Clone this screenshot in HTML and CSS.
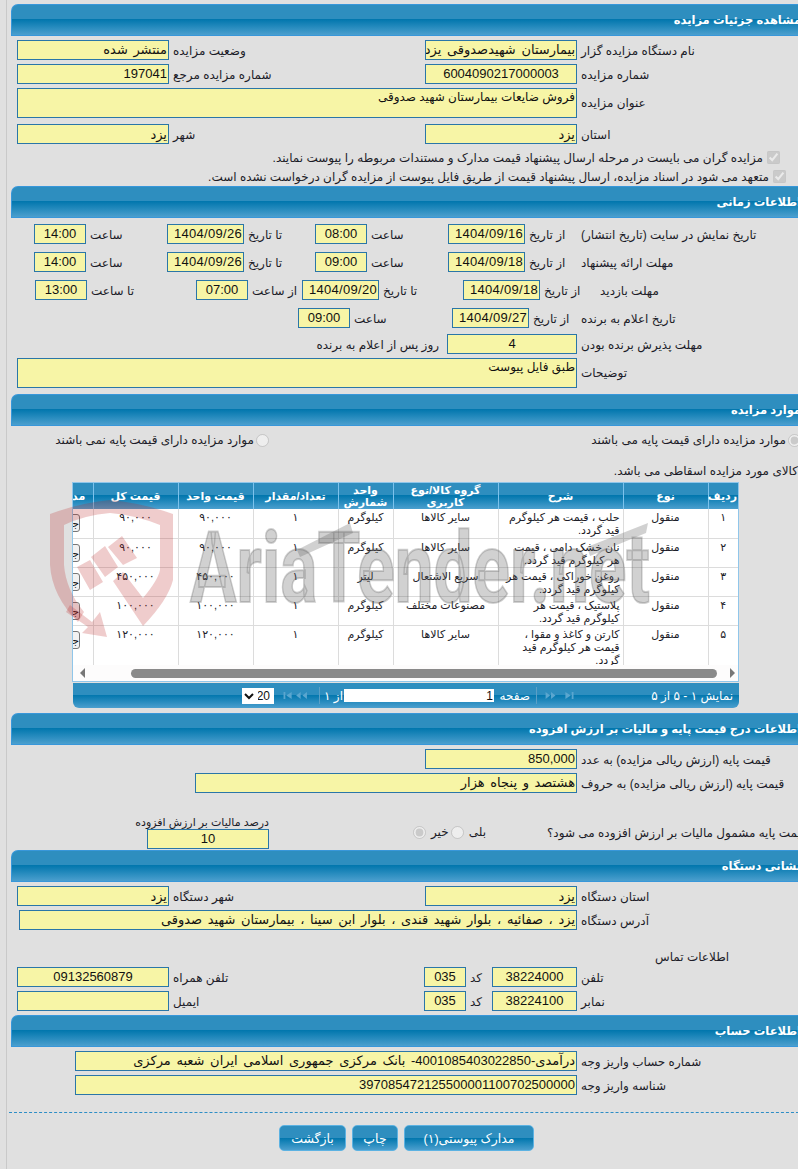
FILE: index.html
```html
<!DOCTYPE html>
<html lang="fa">
<head>
<meta charset="utf-8">
<title>مشاهده جزئیات مزایده</title>
<link rel="stylesheet" href="styles.css">
</head>
<body>
<div class="sheet">
<div class="frame">

<section class="panel">
  <h2 class="head">مشاهده جزئیات مزایده</h2>
  <div class="body b-first">
    <div class="row g-two"><div class="fld">منتشر شده</div><div class="lb">وضعیت مزایده</div><div class="fld">بیمارستان شهیدصدوقی یزد</div><div class="lb">نام دستگاه مزایده گزار</div></div>
    <div class="row g-two"><div class="fld">197041</div><div class="lb">شماره مزایده مرجع</div><div class="fld ctr">6004090217000003</div><div class="lb">شماره مزایده</div></div>
    <div class="row g-area"><div class="fld area">فروش ضایعات بیمارستان شهید صدوقی</div><div class="lb">عنوان مزایده</div></div>
    <div class="row g-two mt6"><div class="fld end">یزد</div><div class="lb">شهر</div><div class="fld end">یزد</div><div class="lb">استان</div></div>
    <div class="chk chk-a"><input type="checkbox" checked disabled><span>مزایده گران می بایست در مرحله ارسال پیشنهاد قیمت مدارک و مستندات مربوطه را پیوست نمایند.</span></div>
    <div class="chk chk-b"><input type="checkbox" checked disabled><span>متعهد می شود در اسناد مزایده، ارسال پیشنهاد قیمت از طریق فایل پیوست از مزایده گران درخواست نشده است.</span></div>
  </div>
</section>

<section class="panel">
  <h2 class="head">اطلاعات زمانی</h2>
  <div class="body b-time">
    <div class="row g-t1"><div class="fld ctr">14:00</div><div class="lb">ساعت</div><div class="fld date">1404/09/26</div><div class="lb">تا تاریخ</div><div class="fld ctr">08:00</div><div class="lb">ساعت</div><div class="fld date">1404/09/16</div><div class="lb">از تاریخ</div><div class="lb">تاریخ نمایش در سایت (تاریخ انتشار)</div></div>
    <div class="row g-t1"><div class="fld ctr">14:00</div><div class="lb">ساعت</div><div class="fld date">1404/09/26</div><div class="lb">تا تاریخ</div><div class="fld ctr">09:00</div><div class="lb">ساعت</div><div class="fld date">1404/09/18</div><div class="lb">از تاریخ</div><div class="lb">مهلت ارائه پیشنهاد</div></div>
    <div class="row g-t2"><div class="fld ctr">13:00</div><div class="lb">تا ساعت</div><div class="fld ctr">07:00</div><div class="lb">از ساعت</div><div class="fld date">1404/09/20</div><div class="lb">تا تاریخ</div><div class="fld date">1404/09/18</div><div class="lb">از تاریخ</div><div class="lb lb-far">مهلت بازدید</div></div>
    <div class="row g-t3"><div class="fld ctr">09:00</div><div class="lb">ساعت</div><div class="fld date">1404/09/27</div><div class="lb">از تاریخ</div><div class="lb">تاریخ اعلام به برنده</div></div>
    <div class="row g-t4 mt-6"><div class="lb lb-end">روز پس از اعلام به برنده</div><div class="fld ctr">4</div><div class="lb">مهلت پذیرش برنده بودن</div></div>
    <div class="row g-area mt-4"><div class="fld area">طبق فایل پیوست</div><div class="lb">توضیحات</div></div>
  </div>
</section>

<section class="panel">
  <h2 class="head">موارد مزایده</h2>
  <div class="body b-items">
    <div class="radios">
      <label class="opt opt-a"><input type="radio" name="base" disabled checked><span>موارد مزایده دارای قیمت پایه می باشند</span></label>
      <label class="opt"><input type="radio" name="base" disabled><span>موارد مزایده دارای قیمت پایه نمی باشند</span></label>
    </div>
    <p class="note">کالای مورد مزایده اسقاطی می باشد.</p>
    <div class="grid">
      <div class="grid-scroll">
        <table>
          <thead><tr><th class="c1">ردیف</th><th class="c2">نوع</th><th class="c3">شرح</th><th class="c4">گروه کالا/نوع کاربری</th><th class="c5">واحد شمارش</th><th class="c6">تعداد/مقدار</th><th class="c7">قیمت واحد</th><th class="c8">قیمت کل</th><th class="c9">مدارک</th></tr></thead>
          <tbody>
            <tr><td>۱</td><td>منقول</td><td class="desc">حلب ، قیمت هر کیلوگرم<br>قید گردد.</td><td>سایر کالاها</td><td>کیلوگرم</td><td>۱</td><td class="num">۹۰,۰۰۰</td><td class="num">۹۰,۰۰۰</td><td><span class="mini">جزئیات</span></td></tr>
            <tr><td>۲</td><td>منقول</td><td class="desc">نان خشک دامی ، قیمت<br>هر کیلوگرم قید گردد.</td><td>سایر کالاها</td><td>کیلوگرم</td><td>۱</td><td class="num">۹۰,۰۰۰</td><td class="num">۹۰,۰۰۰</td><td><span class="mini">جزئیات</span></td></tr>
            <tr><td>۳</td><td>منقول</td><td class="desc">روغن خوراکی ، قیمت هر<br>کیلوگرم قید گردد.</td><td>سریع الاشتعال</td><td>لیتر</td><td>۱</td><td class="num">۴۵۰,۰۰۰</td><td class="num">۴۵۰,۰۰۰</td><td><span class="mini">جزئیات</span></td></tr>
            <tr><td>۴</td><td>منقول</td><td class="desc">پلاستیک ، قیمت هر<br>کیلوگرم قید گردد.</td><td>مصنوعات مختلف</td><td>کیلوگرم</td><td>۱</td><td class="num">۱۰۰,۰۰۰</td><td class="num">۱۰۰,۰۰۰</td><td><span class="mini">جزئیات</span></td></tr>
            <tr class="tall"><td>۵</td><td>منقول</td><td class="desc">کارتن و کاغذ و مقوا ،<br>قیمت هر کیلوگرم قید<br>گردد.</td><td>سایر کالاها</td><td>کیلوگرم</td><td>۱</td><td class="num">۱۲۰,۰۰۰</td><td class="num">۱۲۰,۰۰۰</td><td><span class="mini">جزئیات</span></td></tr>
          </tbody>
        </table>
      </div>
      <div class="hbar">
        <svg class="arrow" viewBox="0 0 6 12"><path d="M6 0V12L0 6Z"/></svg>
        <div class="thumb"></div>
        <svg class="arrow" viewBox="0 0 6 12"><path d="M0 0V12L6 6Z"/></svg>
      </div>
    </div>
    <div class="pager">
      <select class="size"><option>20</option></select>
      <svg class="nav" viewBox="0 0 31 10"><path d="M0 1h2v8H0zM9 1v8L3 5zM19 1v8l-5-4zM26 1v8l-5-4z"/></svg>
      <span class="sep"></span>
      <span class="pg-of">از ۱</span>
      <input class="pg-in" value="1" readonly>
      <span class="pg-lb">صفحه</span>
      <span class="sep"></span>
      <svg class="nav nav-r" viewBox="0 0 32 10"><path d="M0 1v8l5-4zM6 1v8l5-4zM22 1v8l6-4zM29 1h2v8h-2z"/></svg>
      <span class="pg-info">نمایش ۱ - ۵ از ۵</span>
    </div>
  </div>
</section>

<section class="panel">
  <h2 class="head">اطلاعات درج قیمت پایه و مالیات بر ارزش افزوده</h2>
  <div class="body b-price">
    <div class="row g-p1"><div class="fld">850,000</div><div class="lb">قیمت پایه (ارزش ریالی مزایده) به عدد</div></div>
    <div class="row g-p2"><div class="fld">هشتصد و پنجاه هزار</div><div class="lb">قیمت پایه (ارزش ریالی مزایده) به حروف</div></div>
    <div class="tax">
      <div class="tax-col"><div class="tax-lb">درصد مالیات بر ارزش افزوده</div><div class="fld ctr tax-fld">10</div></div>
      <div class="yn">
        <input type="radio" name="vat" disabled checked><span class="yn-a">خیر</span>
        <input type="radio" name="vat" disabled><span class="yn-b">بلی</span>
      </div>
      <div class="lb q">قیمت پایه مشمول مالیات بر ارزش افزوده می شود؟</div>
    </div>
  </div>
</section>

<section class="panel">
  <h2 class="head">نشانی دستگاه</h2>
  <div class="body b-org">
    <div class="row g-two"><div class="fld end">یزد</div><div class="lb">شهر دستگاه</div><div class="fld end">یزد</div><div class="lb">استان دستگاه</div></div>
    <div class="row g-addr"><div class="fld">یزد ، صفائیه ، بلوار شهید قندی ، بلوار ابن سینا ، بیمارستان شهید صدوقی</div><div class="lb">آدرس دستگاه</div></div>
    <div class="contact">اطلاعات تماس</div>
    <div class="row g-ph"><div class="fld ctr">09132560879</div><div class="lb">تلفن همراه</div><div class="fld ctr">035</div><div class="lb">کد</div><div class="fld ctr">38224000</div><div class="lb">تلفن</div></div>
    <div class="row g-ph"><div class="fld"></div><div class="lb">ایمیل</div><div class="fld ctr">035</div><div class="lb">کد</div><div class="fld ctr">38224100</div><div class="lb">نمابر</div></div>
  </div>
</section>

<section class="panel">
  <h2 class="head">اطلاعات حساب</h2>
  <div class="body b-acc">
    <div class="row g-acc"><div class="fld">درآمدی-4001085403022850- بانک مرکزی جمهوری اسلامی ایران شعبه مرکزی</div><div class="lb">شماره حساب واریز وجه</div></div>
    <div class="row g-acc"><div class="fld">397085472125500001100702500000</div><div class="lb">شناسه واریز وجه</div></div>
  </div>
</section>

<div class="actions">
  <button class="btn b-back">بازگشت</button>
  <button class="btn b-print">چاپ</button>
  <button class="btn b-docs">مدارک پیوستی(۱)</button>
</div>

</div>

<svg class="mark" viewBox="0 0 798 1169" aria-hidden="true">
  <g class="mark-red">
    <path fill-rule="evenodd" d="M50 514Q80 503 110 500Q142 503 173 514V580Q168 600 143 626L113 581L123 572L143 598Q158 580 160 570V525Q135 515 110 513Q85 515 64 525V565Q66 590 84 612L78 622Q52 596 50 565Z"/>
    <path d="M77 567L90 560L103 582L90 590ZM91 557L105 546L118 567L105 577ZM108 547L122 536L137 558L123 565Z"/>
    <path d="M70 605L92 622L100 612L107 637L82 633L88 627L66 612Z"/>
  </g>
  <text class="mark-text" x="190" y="602" textLength="460" lengthAdjust="spacingAndGlyphs">AriaTender.net</text>
  <path class="mark-gray" d="M297 550L350 523L353 533L300 557ZM587 547L648 523L646 533L590 556Z"/>
</svg>
</div>
</body>
</html>
```

FILE: styles.css
```css
* { box-sizing: border-box; }
html, body { margin: 0; padding: 0; background: #e0e0e0; }
body { font: 12px/20px "Liberation Sans", "DejaVu Sans", sans-serif; color: #1c1c28; }

.sheet { position: relative; width: 798px; height: 1169px; overflow: hidden; padding-left: 6px; }
.frame { width: 900px; height: 1169px; padding: 4px 0 0 4px; border-left: 1px solid #c9c9c9; }

.panel { width: 805px; }
.head {
  margin: 0; height: 32px; padding: 0 15px 0 0;
  direction: rtl; text-align: right;
  font-size: 11.5px; font-weight: bold; line-height: 31px; color: #fff;
  border: 1px solid #3897da; border-right: 0; border-radius: 7px 0 0 0;
  background: linear-gradient(#2e8ebf 0, #2e8ebf 47%, #0076ad 47%, #4b9fce 100%);
}
.body { padding-left: 6px; }
.b-first { padding-top: 4px; height: 150px; }
.b-time { padding-top: 6px; height: 176px; }
.b-items { height: 287px; }
.b-price { padding-top: 4px; height: 105px; }
.b-org { padding-top: 4px; height: 133px; }
.b-acc { padding-top: 4px; height: 48px; }

.row { display: grid; margin-bottom: 4px; height: 20px; }
.g-two { grid-template-columns: 152px 256px 152px 221px; }
.g-area { grid-template-columns: 560px 221px; height: 30px; }
.g-area .lb { align-self: center; }
.mt6 { margin-top: 6px; }
.mt-6 { margin-top: -2px; }
.mt-4 { margin-top: 0; }
.g-t1, .g-t2, .g-t3, .g-t4 { margin-bottom: 8px; }
.g-t1 { padding-left: 17px; grid-template-columns: 52px 81px 77px 71px 52px 81px 77px 52px 221px; }
.g-t2 { padding-left: 18px; grid-template-columns: 52px 109px 52px 54px 77px 84px 77px 37px 221px; }
.g-t3 { padding-left: 281px; grid-template-columns: 52px 102px 77px 48px 221px; }
.g-t4 { padding-left: 303px; grid-template-columns: 127px 130px 221px; margin-bottom: 4px; }
.g-p1 { padding-left: 408px; grid-template-columns: 152px 221px; }
.g-p2 { padding-left: 178px; grid-template-columns: 382px 221px; }
.g-addr { padding-left: 2px; grid-template-columns: 558px 221px; }
.g-ph { grid-template-columns: 152px 255px 42px 26px 85px 221px; }
.g-acc { padding-left: 58px; grid-template-columns: 502px 221px; }

.fld {
  direction: rtl; height: 20px; padding: 0 1px; overflow: hidden; white-space: nowrap;
  text-align: right; font-size: 13px; line-height: 18px; color: #111; word-spacing: 2px;
  background: #f7f5a6; border: 1px solid #2a76a8;
}
.ctr { text-align: center; }
.end { line-height: 20px; }
.area { height: 30px; font-size: 12px; line-height: 16px; word-spacing: 0; }
.date { letter-spacing: .3px; }

.lb { direction: rtl; justify-self: start; width: max-content; margin-left: 4px; padding-top: 1px; white-space: nowrap; text-align: left; line-height: 21px; }
.lb-far { margin-left: 23px; }
.lb-end { justify-self: end; margin: 0 8px 0 0; }

.chk { direction: rtl; display: flex; align-items: center; gap: 4px; white-space: nowrap; height: 19px; }
.chk input, .radios input, .yn input { margin: 0; flex: none; width: 13px; height: 13px; }
.chk-a { padding-right: 36px; }
.chk-b { padding-right: 30px; }

.radios { direction: rtl; display: flex; width: 784px; padding-top: 4px; height: 24px; }
.opt { display: flex; align-items: center; gap: 2px; white-space: nowrap; height: 20px; }
.opt-a { width: 532px; flex: none; }
.note { direction: rtl; margin: 13px 0 3px; width: 781px; line-height: 16px; height: 16px; white-space: nowrap; }

.grid { margin-left: 55px; width: 667px; height: 200px; border: 1px solid #90c6ea; background: #fff; }
.grid-scroll { direction: rtl; height: 182px; overflow: hidden; }
table { border-collapse: collapse; table-layout: fixed; width: 695px; font-size: 11px; line-height: 13px; }
thead tr { height: 26px; background: linear-gradient(#2e8ebf 0, #2e8ebf 47%, #0076ad 47%, #4b9fce 100%); }
th { color: #fff; font-weight: bold; font-size: 11px; line-height: 12px; padding: 0 1px; border-left: 1px solid #7cc2ec; text-align: center; }
td { height: 29px; padding: 2px 2px 0; vertical-align: top; text-align: center; border: 1px solid #dcdcdc; border-width: 0 0 1px 1px; white-space: nowrap; }
.tall td { height: 40px; }
.desc { text-align: right; padding-right: 3px; }
.num { letter-spacing: .2px; }
.c1 { width: 30px; } .c2 { width: 85px; } .c3 { width: 125px; } .c4 { width: 105px; } .c5 { width: 55px; }
.c6 { width: 85px; } .c7 { width: 75px; } .c8 { width: 85px; } .c9 { width: 50px; }
.mini { display: inline-block; width: 24px; height: 18px; margin-top: 3px; overflow: hidden; border: 1px solid #777; border-radius: 3px; background: #f2f2f2; line-height: 16px; color: #111; }

.hbar { display: flex; align-items: center; height: 16px; padding: 0 1px; background: #fdfcfc; }
.arrow { width: 5px; height: 10px; margin: 0 2px 0 6px; fill: #777; flex: none; }
.thumb { margin-left: 44px; width: 589px; height: 9px; border-radius: 5px; background: #8a8a8a; }
.hbar .arrow:last-child { margin-left: 13px; }

.pager {
  display: flex; align-items: center; margin: 1px 0 0 56px; width: 666px; height: 25px; color: #fff;
  background: linear-gradient(#2e8ebf 0, #2e8ebf 47%, #0076ad 47%, #4b9fce 100%);
  border-radius: 0 0 6px 6px; line-height: 14px;
}
.size { direction: rtl; width: 32px; height: 16px; margin-left: 169px; padding: 0; border: 0; border-radius: 0; background: #fff; font: 12px "Liberation Sans", sans-serif; color: #111; }
.nav { height: 9px; fill: #5aa6cf; flex: none; }
.pager > .nav { width: 31px; margin-left: 8px; }
.pager > .nav-r { width: 32px; margin-left: 7px; }
.sep { width: 1px; height: 17px; margin-left: 6px; background: #5a9fc6; flex: none; }
.pg-of { direction: rtl; width: 22px; margin-left: 1px; white-space: nowrap; }
.pg-in { direction: ltr; width: 150px; height: 13px; margin-left: 1px; padding: 0 1px 0 0; border: 0; background: #fff; text-align: right; font: 12px "Liberation Sans", sans-serif; color: #111; }
.pg-lb { direction: rtl; width: 32px; margin-left: 4px; white-space: nowrap; }
.pg-info { direction: rtl; margin-left: auto; margin-right: 6px; white-space: nowrap; }

.tax { display: flex; align-items: flex-end; height: 53px; margin-top: -1px; }
.tax-col { display: flex; flex-direction: column; align-items: flex-end; margin-left: 117px; width: 135px; flex: none; }
.tax-lb { direction: rtl; white-space: nowrap; font-size: 11px; line-height: 14px; }
.tax-fld { width: 122px; }
.yn { display: flex; align-items: center; height: 20px; margin: 0 0 7px 144px; flex: none; width: 74px; }
.yn-a { margin: 0 2px 0 5px; }
.yn-b { margin-left: 5px; }
.q { margin: 0 0 5px 60px; }

.contact { direction: rtl; width: max-content; margin-left: 638px; height: 33px; padding-top: 13px; white-space: nowrap; line-height: 20px; }

.actions { display: flex; gap: 6px; margin: 17px 0 0 -2px; padding: 12px 0 0 270px; height: 60px; border-top: 1px dashed #2e8ec6; width: 795px; }
.btn { height: 26px; padding: 0; border: 1px solid #5cb2e2; border-radius: 5px; color: #fff; font: 12.5px "Liberation Sans", "DejaVu Sans", sans-serif; background: linear-gradient(#2e8ebf 0, #2e8ebf 50%, #0076ad 50%, #4b9fce 100%); }
.b-back { width: 67px; }
.b-print { width: 46px; }
.b-docs { width: 130px; }

.mark { position: absolute; left: 0; top: 0; width: 798px; height: 1169px; pointer-events: none; }
.mark-red { fill: rgba(190, 40, 40, .24); }
.mark-text { font: bold 98px Roboto, sans-serif; fill: rgba(90, 90, 90, .28); stroke: rgba(90, 90, 90, .28); stroke-width: 2px; }
.mark-gray { fill: rgba(90, 90, 90, .28); }
```
